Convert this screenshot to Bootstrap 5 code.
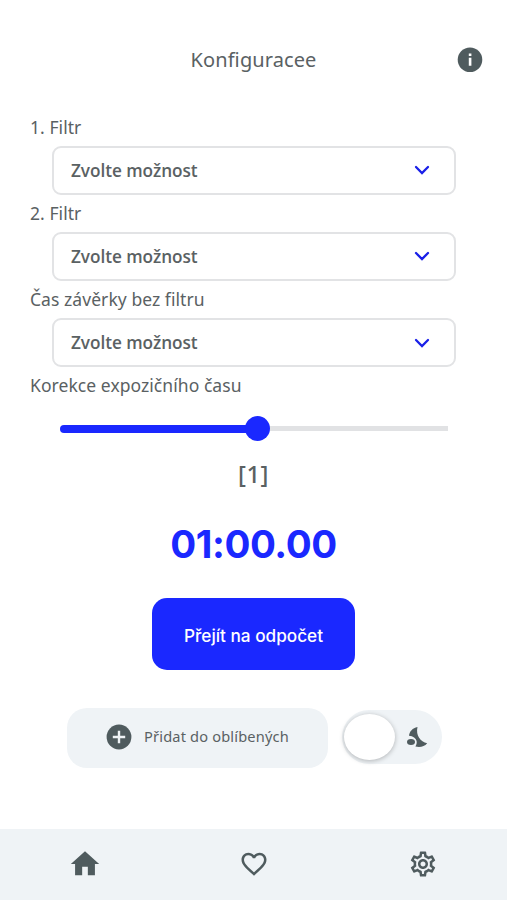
<!DOCTYPE html>
<html lang="cs">
<head>
<meta charset="utf-8">
<meta name="viewport" content="width=device-width, initial-scale=1">
<title>Konfigurace</title>
<link href="https://cdn.jsdelivr.net/npm/bootstrap@5.3.0/dist/css/bootstrap.min.css" rel="stylesheet">
<style>
:root{--ink:#5a6163;--blue:#1a28ff;--mist:#eff3f6;--line:#e2e3e5}
body{font-family:"Noto Sans",sans-serif;color:var(--ink);background:#fff;height:900px;overflow:hidden}
svg{display:block;flex:none;fill:#4f5b5e}
.top-bar{height:60px;margin-top:30px;padding:0 24px;grid-template-columns:1fr auto 1fr}
.top-title{font-size:20px;letter-spacing:.1px}
main{padding-top:26.500px}
.field-label{height:20px;line-height:20px;font-size:17.5px;letter-spacing:.06px;padding-left:30px;white-space:nowrap}
.picker{width:404px;height:49px;border:2px solid var(--line);border-radius:9px;padding:0 23px 0 17px;margin:9.2px 0 8.1px 52px;font:600 17.2px "Open Sans",sans-serif;letter-spacing:-.05px;color:var(--ink);background:#fff}
.picker svg{fill:none;stroke:#1a20e8;stroke-width:2.3;stroke-linecap:round}
.slider{height:24px;margin:21.5px 59px 0 60px}
.fill{width:186px;height:8px;border-radius:4px 0 0 4px;background:var(--blue)}
.thumb{width:25px;height:25px;margin-left:-1.5px;background:var(--blue)}
.rest{height:5px;background:#e1e2e4}
.step{height:36px;line-height:36px;margin-top:15px;font-size:24px;font-weight:500;letter-spacing:.4px}
.timer{margin-top:22px;font:700 38.5px/60px Inter,sans-serif;letter-spacing:-.4px;color:var(--blue)}
.go{width:203px;height:72px;margin-top:24px;border:0;border-radius:15px;background:var(--blue)!important;color:#fff!important;font:500 17.2px Inter,sans-serif;padding:9px 0 6px}
.actions{height:60px;margin:38px 65px 0 67px}
.fav{width:261px;height:60px;border:0;border-radius:20px;background:var(--mist);color:var(--ink);font-size:14.6px;letter-spacing:.17px;padding:0 0 2px 38px;gap:11px}
.switch{width:100px;height:54px;margin-bottom:2px;border-radius:27px;background:var(--mist);padding:0 14px 0 2px}
.knob{width:51px;height:46px;background:#fff;box-shadow:0 1px 5px rgba(0,0,0,.27)}
.dock{height:71px;background:var(--mist);padding-bottom:2px}
</style>
</head>
<body class="d-flex flex-column">
<header class="top-bar d-grid align-items-center flex-shrink-0">
  <span></span>
  <span class="top-title">Konfiguracee</span>
  <svg class="ms-auto" width="26" height="26" viewBox="0 0 26 26"><circle cx="13" cy="12.700" r="12.300"/><path d="M11.800 6.400h2.600v2.600h-2.600zM11.800 10.800h2.600v8h-2.600z" fill="#fff"/></svg>
</header>
<main>
  <div class="field-label">1. Filtr</div>
  <div class="picker d-flex align-items-center justify-content-between"><span>Zvolte možnost</span><svg width="18" height="12" viewBox="0 0 18 12"><path d="M3 3l6 6 6-6"/></svg></div>
  <div class="field-label">2. Filtr</div>
  <div class="picker d-flex align-items-center justify-content-between"><span>Zvolte možnost</span><svg width="18" height="12" viewBox="0 0 18 12"><path d="M3 3l6 6 6-6"/></svg></div>
  <div class="field-label">Čas závěrky bez filtru</div>
  <div class="picker d-flex align-items-center justify-content-between"><span>Zvolte možnost</span><svg width="18" height="12" viewBox="0 0 18 12"><path d="M3 3l6 6 6-6"/></svg></div>
  <div class="field-label">Korekce expozičního času</div>
  <div class="slider d-flex align-items-center"><div class="fill"></div><div class="thumb rounded-circle"></div><div class="rest flex-grow-1"></div></div>
  <div class="step text-center">[1]</div>
  <div class="timer text-center">01:00.00</div>
  <button class="go btn d-block mx-auto" type="button">Přejít na odpočet</button>
  <div class="actions d-flex align-items-center justify-content-between">
    <button class="fav btn d-flex align-items-center" type="button"><svg width="28" height="28" viewBox="0 0 28 28"><circle cx="14" cy="14" r="12.400"/><path d="M14 7.800v12.400M7.800 14h12.400" stroke="#eff3f6" stroke-width="2.400"/></svg><span>Přidat do oblíbených</span></button>
    <div class="switch d-flex align-items-center justify-content-between"><div class="knob rounded-circle"></div><svg width="22" height="22" viewBox="0 0 22 22"><path d="M11.500 1C6.500 2 3.500 5.500 3 9.700c4.200.5 6.800 2.300 7.600 5.300.4 2-.2 4-1.200 5.500 4.600 1 9 .2 11.800-3.300C14.500 16 9.500 9.500 11.500 1z"/><ellipse cx="5" cy="16" rx="4" ry="3"/></svg></div>
  </div>
</main>
<nav class="dock row g-0 align-items-center flex-shrink-0 mt-auto">
  <div class="col-4 d-flex justify-content-center"><svg width="34" height="34" viewBox="0 0 24 24"><path d="M10 20v-6h4v6h5v-8h3L12 3 2 12h3v8z"/></svg></div>
  <div class="col-4 d-flex justify-content-center"><svg width="30" height="30" viewBox="0 0 24 24"><path d="M16.500 3c-1.740 0-3.410.81-4.500 2.090C10.910 3.810 9.240 3 7.500 3 4.420 3 2 5.420 2 8.500c0 3.780 3.400 6.860 8.550 11.540L12 21.350l1.450-1.320C18.600 15.360 22 12.280 22 8.500 22 5.420 19.580 3 16.500 3zm-4.400 15.550-.1.1-.1-.1C7.140 14.240 4 11.390 4 8.500 4 6.500 5.500 5 7.500 5c1.540 0 3.040.99 3.570 2.360h1.870C13.460 5.990 14.960 5 16.500 5c2 0 3.500 1.500 3.500 3.500 0 2.890-3.140 5.740-7.900 10.050z"/></svg></div>
  <div class="col-4 d-flex justify-content-center"><svg width="30" height="30" viewBox="0 0 24 24"><path d="M19.430 12.980c.04-.32.07-.64.07-.98 0-.34-.03-.66-.07-.98l2.110-1.650c.19-.15.24-.42.12-.64l-2-3.460c-.09-.16-.26-.25-.44-.25-.06 0-.12.01-.17.03l-2.490 1c-.52-.4-1.080-.73-1.690-.98l-.38-2.650C14.460 2.180 14.250 2 14 2h-4c-.25 0-.46.18-.49.42l-.38 2.650c-.61.25-1.170.59-1.690.98l-2.490-1c-.06-.02-.12-.03-.18-.03-.17 0-.34.09-.43.25l-2 3.460c-.13.22-.07.49.12.64l2.110 1.650c-.04.32-.07.65-.07.98 0 .33.03.66.07.98l-2.110 1.650c-.19.15-.24.42-.12.64l2 3.460c.09.16.26.25.44.25.06 0 .12-.01.17-.03l2.490-1c.52.4 1.080.73 1.690.98l.38 2.650c.03.24.24.42.49.42h4c.25 0 .46-.18.49-.42l.38-2.650c.61-.25 1.170-.59 1.690-.98l2.490 1c.06.02.12.03.18.03.17 0 .34-.09.43-.25l2-3.460c.12-.22.07-.49-.12-.64l-2.110-1.650zm-1.980-1.710c.04.31.05.52.05.73 0 .21-.02.43-.05.73l-.14 1.130.89.7 1.080.84-.7 1.210-1.270-.51-1.040-.42-.9.68c-.43.32-.84.56-1.250.73l-1.060.43-.16 1.130-.2 1.350h-1.400l-.19-1.350-.16-1.130-1.060-.43c-.43-.18-.83-.41-1.230-.71l-.91-.7-1.060.43-1.270.51-.7-1.210 1.080-.84.89-.7-.14-1.130c-.03-.31-.05-.54-.05-.74s.02-.43.05-.73l.14-1.130-.89-.7-1.080-.84.7-1.210 1.270.51 1.040.42.9-.68c.43-.32.84-.56 1.250-.73l1.060-.43.16-1.130.2-1.350h1.390l.19 1.350.16 1.130 1.060.43c.43.18.83.41 1.230.71l.91.7 1.060-.43 1.270-.51.7 1.210-1.070.85-.89.7.14 1.130zM12 8c-2.210 0-4 1.790-4 4s1.790 4 4 4 4-1.790 4-4-1.790-4-4-4zm0 6c-1.100 0-2-.9-2-2s.9-2 2-2 2 .9 2 2-.9 2-2 2z"/></svg></div>
</nav>
<script src="https://cdn.jsdelivr.net/npm/bootstrap@5.3.0/dist/js/bootstrap.bundle.min.js"></script>
</body>
</html>
